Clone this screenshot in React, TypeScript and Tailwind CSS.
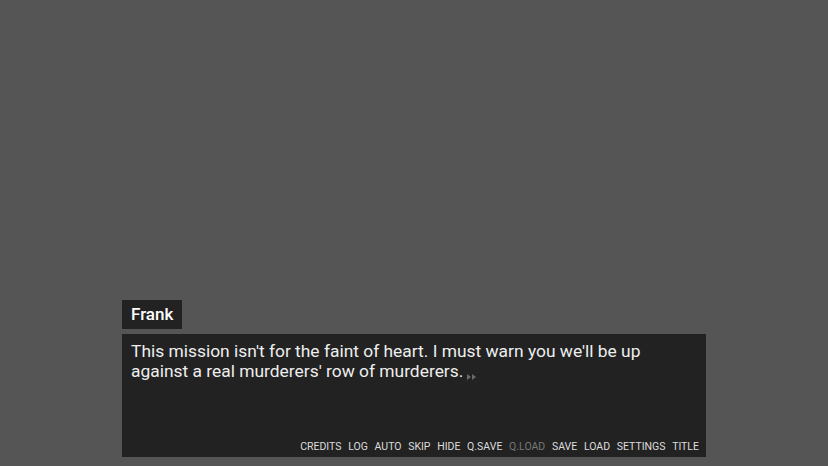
import React from "react";

const menu = ["CREDITS", "LOG", "AUTO", "SKIP", "HIDE", "Q.SAVE", "Q.LOAD", "SAVE", "LOAD", "SETTINGS", "TITLE"];

export default function App() {
  return (
    <div
      className="w-[828px] h-[466px] bg-[#555555] flex flex-col justify-end overflow-hidden"
      style={{ fontFamily: "Roboto, 'Liberation Sans', sans-serif" }}
    >
      <div className="flex flex-col items-start pl-[122px] pb-[9px]">
        <div className="bg-[#222222] h-[29px] px-[9px] flex items-center text-[17px] text-white font-medium">
          Frank
        </div>
        <div className="mt-[5px] w-[584px] h-[123px] bg-[#222222] flex flex-col justify-between">
          <div className="pl-[9px] pr-[10px] pt-[7px] text-[17.4px] leading-[20px] text-[#eeeeee]">
            This mission isn't for the faint of heart. I must warn you we'll be up against a real murderers' row of murderers.
            <svg width="10" height="6" viewBox="0 0 10 6" className="inline-block ml-[4px] align-[-3px]">
              <polygon points="0,0 4,3 0,6" fill="#6a6a6a" />
              <polygon points="5,0 9,3 5,6" fill="#6a6a6a" />
            </svg>
          </div>
          <div className="flex justify-end gap-[6.7px] pr-[7px] pb-[4px] text-[10.5px] leading-[13px] text-[#dddddd]">
            {menu.map((m) => (
              <span key={m} className={m === "Q.LOAD" ? "text-[#777777]" : ""}>
                {m}
              </span>
            ))}
          </div>
        </div>
      </div>
    </div>
  );
}
